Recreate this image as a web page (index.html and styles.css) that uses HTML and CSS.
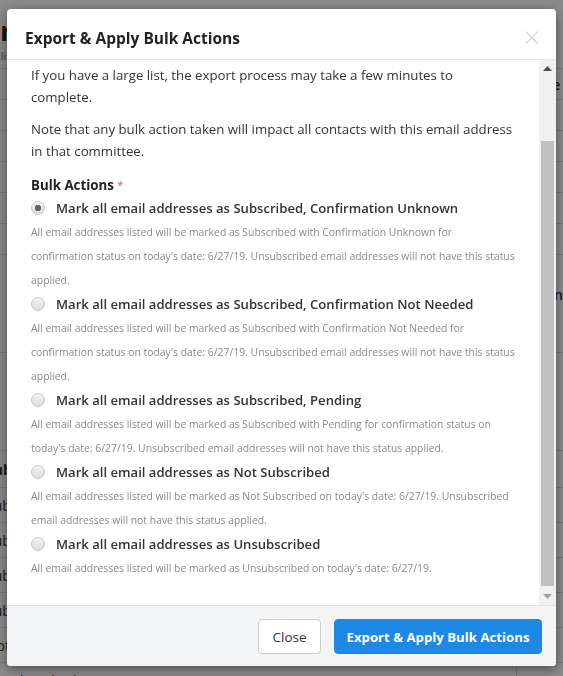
FILE: index.html
```html
<!DOCTYPE html>
<html>
<head>
<meta charset="utf-8">
<link rel="stylesheet" href="styles.css">
</head>
<body>
<div class="page">
  <div class="page-head">
    <h1 class="page-title">Export</h1>
    <div class="page-sub">Subscribers list</div>
  </div>
  <table class="grid">
    <tr><td></td><td>Name</td></tr>
    <tr><td></td><td></td></tr>
    <tr><td></td><td></td></tr>
    <tr><td></td><td></td></tr>
    <tr><td></td><td></td></tr>
    <tr><td></td><td></td></tr>
    <tr class="tall"><td></td><td>Action<br>Date</td></tr>
    <tr class="tall"><td></td><td></td></tr>
    <tr class="head"><td>Subscribed</td><td></td></tr>
    <tr class="row"><td>Subscribed</td><td></td></tr>
    <tr class="row"><td>Subscribed</td><td></td></tr>
    <tr class="row"><td>Subscribed</td><td></td></tr>
    <tr class="row"><td>Subscribed</td><td></td></tr>
    <tr class="row"><td>Not Subscribed</td><td></td></tr>
    <tr class="row"><td>Unsubscribed</td><td></td></tr>
  </table>
</div>

<div class="overlay"></div>

<div class="modal">
  <div class="modal-header">
    <h2 class="modal-title">Export &amp; Apply Bulk Actions</h2>
    <span class="modal-close">&times;</span>
  </div>
  <div class="modal-body">
    <div class="body-content">
      <p class="para">If you have a large list, the export process may take a few minutes to complete.</p>
      <p class="para">Note that any bulk action taken will impact all contacts with this email address in that committee.</p>
      <div class="field-label">Bulk Actions <span class="req">*</span></div>

      <label class="option">
        <span class="option-row"><input type="radio" name="bulk" checked><span class="option-text">Mark all email addresses as Subscribed, Confirmation Unknown</span></span>
        <span class="option-desc">All email addresses listed will be marked as Subscribed with Confirmation Unknown for confirmation status on today's date: 6/27/19. Unsubscribed email addresses will not have this status applied.</span>
      </label>
      <label class="option">
        <span class="option-row"><input type="radio" name="bulk"><span class="option-text">Mark all email addresses as Subscribed, Confirmation Not Needed</span></span>
        <span class="option-desc">All email addresses listed will be marked as Subscribed with Confirmation Not Needed for confirmation status on today's date: 6/27/19. Unsubscribed email addresses will not have this status applied.</span>
      </label>
      <label class="option">
        <span class="option-row"><input type="radio" name="bulk"><span class="option-text">Mark all email addresses as Subscribed, Pending</span></span>
        <span class="option-desc">All email addresses listed will be marked as Subscribed with Pending for confirmation status on today's date: 6/27/19. Unsubscribed email addresses will not have this status applied.</span>
      </label>
      <label class="option">
        <span class="option-row"><input type="radio" name="bulk"><span class="option-text">Mark all email addresses as Not Subscribed</span></span>
        <span class="option-desc">All email addresses listed will be marked as Not Subscribed on today's date: 6/27/19. Unsubscribed email addresses will not have this status applied.</span>
      </label>
      <label class="option">
        <span class="option-row"><input type="radio" name="bulk"><span class="option-text">Mark all email addresses as Unsubscribed</span></span>
        <span class="option-desc">All email addresses listed will be marked as Unsubscribed on today's date: 6/27/19.</span>
      </label>
    </div>
    <div class="scrollbar" aria-hidden="true">
      <div class="sb-btn"><svg width="9" height="5" viewBox="0 0 9 5"><polygon points="0,5 9,5 4.5,0" fill="#4f4f4f"/></svg></div>
      <div class="sb-track"><div class="sb-thumb"></div></div>
      <div class="sb-btn"><svg width="9" height="5" viewBox="0 0 9 5"><polygon points="0,0 9,0 4.5,5" fill="#a3a3a3"/></svg></div>
    </div>
  </div>
  <div class="modal-footer">
    <button class="btn btn-default">Close</button>
    <button class="btn btn-primary">Export &amp; Apply Bulk Actions</button>
  </div>
</div>
</body>
</html>
```
FILE: styles.css
```css
html, body {
  margin: 0;
  padding: 0;
  height: 100%;
  overflow: hidden;
}
body {
  font-family: "Open Sans", "Noto Sans", sans-serif;
  color: #333;
  background: #fff;
}

/* background page */
.page {
  padding: 14px 0 0 0;
}
.page-head {
  margin-left: -62px;
  border-bottom: 1px solid #ddd;
  height: 54px;
}
.page-title {
  margin: 0;
  font-size: 26px;
  font-weight: 700;
  color: #222;
  line-height: 34px;
}
.page-sub {
  font-size: 11px;
  color: #777;
}
.grid {
  width: calc(100% + 60px);
  margin-left: -60px;
  border-collapse: collapse;
  font-size: 14px;
}
.grid td {
  border-bottom: 1px solid #ddd;
  height: 30px;
  padding: 0;
  color: #333;
}
.grid tr.tall td {
  height: 97px;
}
.grid tr.head td {
  height: 36px;
  font-weight: 700;
}
.grid tr.row td {
  height: 34px;
}
.grid td:first-child {
  width: 612px;
  border-right: 1px solid #ddd;
  text-align: left;
  padding-left: 46px;
}
.grid td:last-child {
  padding-left: 3px;
  font-weight: 600;
}

.overlay {
  position: fixed;
  inset: 0;
  background: rgba(0, 0, 0, 0.46);
}

/* modal */
.modal {
  position: fixed;
  left: 7px;
  top: 9px;
  width: 549px;
  height: 657px;
  background: #fff;
  border-radius: 4px;
  box-shadow: 0 3px 12px rgba(0, 0, 0, 0.45);
  display: flex;
  flex-direction: column;
  overflow: hidden;
}
.modal-header {
  height: 50px;
  flex: none;
  display: flex;
  align-items: center;
  justify-content: space-between;
  padding: 0 18px 0 18px;
  border-bottom: 1px solid #e5e5e5;
}
.modal-title {
  margin: 0;
  font-size: 15.5px;
  font-weight: 700;
  color: #222;
  line-height: 20px;
  padding-top: 8px;
}
.modal-close {
  font-size: 29px;
  line-height: 20px;
  color: #d2d2d2;
  font-weight: 300;
  padding-top: 6px;
  margin-right: -2px;
}
.modal-body {
  flex: 1;
  min-height: 0;
  display: flex;
}
.body-content {
  flex: 1;
  min-width: 0;
  overflow: hidden;
  padding: 4px 23px 0 24px;
}
.scrollbar {
  flex: none;
  width: 17px;
  background: #f1f1f1;
  display: flex;
  flex-direction: column;
}
.sb-btn {
  height: 17px;
  flex: none;
  display: flex;
  align-items: center;
  justify-content: center;
}
.sb-track {
  flex: 1;
  display: flex;
  flex-direction: column;
  justify-content: flex-end;
  padding: 0 2px 2px 2px;
}
.sb-thumb {
  height: 445px;
  background: #c1c1c1;
}
.para {
  margin: 0 0 10px 0;
  font-size: 13.25px;
  line-height: 22px;
  color: #333;
}
.field-label {
  margin-top: 12px;
  font-size: 13.3px;
  font-weight: 700;
  line-height: 22px;
  color: #222;
}
.req {
  color: #d9534f;
  font-weight: 400;
  font-size: 11px;
  vertical-align: top;
}
.option {
  display: block;
}
.option-row {
  display: flex;
  align-items: center;
  height: 24px;
  margin-top: 0;
}
.option-row input {
  -webkit-appearance: none;
  appearance: none;
  width: 14px;
  height: 14px;
  margin: 0 11px 0 0;
  border-radius: 50%;
  border: 1px solid #c8c8c8;
  background: linear-gradient(#f4f4f4, #dcdcdc);
  flex: none;
}
.option-row input:checked {
  background: radial-gradient(circle, #666 0 3px, transparent 3.5px), linear-gradient(#f4f4f4, #dcdcdc);
}
.option-text {
  font-size: 13.1px;
  font-weight: 600;
  color: #333;
}
.option-desc {
  display: block;
  font-size: 10.4px;
  line-height: 24px;
  color: #8a8a8a;
}

.modal-footer {
  flex: none;
  height: 61px;
  box-sizing: border-box;
  border-top: 1px solid #e2e2e2;
  background: #f3f4f6;
  display: flex;
  justify-content: flex-end;
  align-items: flex-start;
  gap: 13px;
  padding: 13px 14px 0 0;
}
.btn {
  height: 35px;
  border-radius: 4px;
  font-family: "Open Sans", "Noto Sans", sans-serif;
  font-size: 13.5px;
  cursor: pointer;
  white-space: nowrap;
  padding: 0;
}
.btn-default {
  background: #fff;
  border: 1px solid #ccc;
  color: #333;
  width: 63px;
  font-weight: 500;
}
.btn-primary {
  background: #1e88e5;
  border: 1px solid #1e88e5;
  color: #fff;
  font-weight: 700;
  font-size: 13.2px;
  width: 208px;
}
```
